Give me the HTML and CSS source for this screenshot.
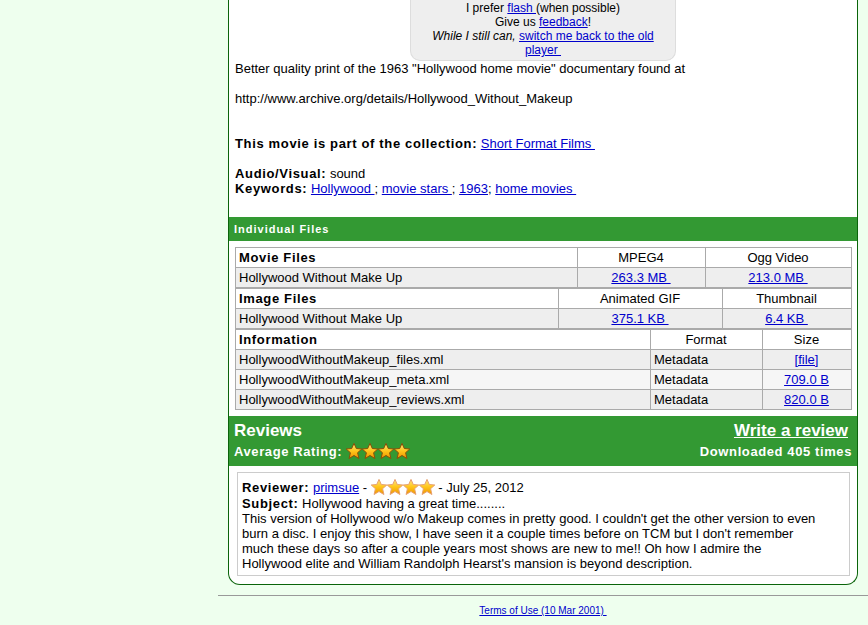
FILE: index.html
```html
<!DOCTYPE html>
<html>
<head>
<meta charset="utf-8">
<title>Hollywood Without Make Up</title>
<link rel="stylesheet" href="styles.css">
</head>
<body>
<svg class="defs" width="0" height="0" aria-hidden="true">
  <defs>
    <linearGradient id="gold" x1="0" y1="0" x2="0" y2="1">
      <stop offset="0" stop-color="#ffe680"/>
      <stop offset="0.5" stop-color="#ffc61a"/>
      <stop offset="1" stop-color="#ee9200"/>
    </linearGradient>
    <symbol id="star" viewBox="0 0 16 16">
      <path d="M8 0.4 L10.3 5.5 L15.8 6 L11.6 9.7 L12.9 15.5 L8 12.5 L3.1 15.5 L4.4 9.7 L0.2 6 L5.7 5.5 Z" fill="url(#gold)" stroke="#8a4e08" stroke-width="1" stroke-linejoin="round"/>
    </symbol>
    <symbol id="star-light" viewBox="0 0 16 16">
      <path d="M8 0.4 L10.3 5.5 L15.8 6 L11.6 9.7 L12.9 15.5 L8 12.5 L3.1 15.5 L4.4 9.7 L0.2 6 L5.7 5.5 Z" fill="url(#gold)" stroke="#e6a070" stroke-width="1" stroke-linejoin="round"/>
    </symbol>
  </defs>
</svg>
<div class="page">
  <div class="box">
    <div class="player-note">
      I prefer <a href="#">flash </a>(when possible)<br>
      Give us <a href="#">feedback</a>!<br>
      <i>While I still can,</i> <a href="#">switch me back to the old player&nbsp;</a>
    </div>
    <div class="desc">
      Better quality print of the 1963 "Hollywood home movie" documentary found at<br><br>
      http://www.archive.org/details/Hollywood_Without_Makeup<br><br><br>
      <b class="key">This movie is part of the collection:</b> <a href="#">Short Format Films&nbsp;</a><br><br>
      <b class="key">Audio/Visual:</b> sound<br>
      <b class="key">Keywords:</b> <a href="#">Hollywood </a>; <a href="#">movie stars </a>; <a href="#">1963</a>; <a href="#">home movies&nbsp;</a>
    </div>
    <div class="section-head">Individual Files</div>
    <div class="files">
      <table class="ftable">
        <colgroup><col class="m1"><col class="m2"><col class="m3"></colgroup>
        <tr class="hrow"><td class="key">Movie Files</td><td class="c">MPEG4</td><td class="c">Ogg Video</td></tr>
        <tr class="odd"><td>Hollywood Without Make Up</td><td class="c"><a href="#">263.3 MB&nbsp;</a></td><td class="c"><a href="#">213.0 MB&nbsp;</a></td></tr>
      </table>
      <table class="ftable">
        <colgroup><col class="i1"><col class="i2"><col class="i3"></colgroup>
        <tr class="hrow"><td class="key">Image Files</td><td class="c">Animated GIF</td><td class="c">Thumbnail</td></tr>
        <tr class="odd"><td>Hollywood Without Make Up</td><td class="c"><a href="#">375.1 KB&nbsp;</a></td><td class="c"><a href="#">6.4 KB&nbsp;</a></td></tr>
      </table>
      <table class="ftable">
        <colgroup><col class="n1"><col class="n2"><col class="n3"></colgroup>
        <tr class="hrow"><td class="key">Information</td><td class="c">Format</td><td class="c">Size</td></tr>
        <tr class="odd"><td>HollywoodWithoutMakeup_files.xml</td><td>Metadata</td><td class="c"><a href="#">[file]</a></td></tr>
        <tr class="even"><td>HollywoodWithoutMakeup_meta.xml</td><td>Metadata</td><td class="c"><a href="#">709.0 B</a></td></tr>
        <tr class="odd"><td>HollywoodWithoutMakeup_reviews.xml</td><td>Metadata</td><td class="c"><a href="#">820.0 B</a></td></tr>
      </table>
    </div>
    <div class="reviews-head">
      <div class="rh-row">
        <span class="rh-title">Reviews</span>
        <a class="rh-write" href="#">Write a review</a>
      </div>
      <div class="rh-row">
        <span class="rh-avg">Average Rating: <span class="stars"><svg class="star"><use href="#star"/></svg><svg class="star"><use href="#star"/></svg><svg class="star"><use href="#star"/></svg><svg class="star"><use href="#star"/></svg></span></span>
        <span class="rh-dl">Downloaded 405 times</span>
      </div>
    </div>
    <div class="review-wrap">
      <div class="review">
        <div class="rv-line"><b class="key">Reviewer:</b> <a href="#">primsue</a> - <span class="stars"><svg class="star"><use href="#star-light"/></svg><svg class="star"><use href="#star-light"/></svg><svg class="star"><use href="#star-light"/></svg><svg class="star"><use href="#star-light"/></svg></span> - July 25, 2012</div>
        <div><b class="key">Subject:</b> Hollywood having a great time........</div>
        <div class="rv-body">This version of Hollywood w/o Makeup comes in pretty good. I couldn't get the other version to even burn a disc. I enjoy this show, I have seen it a couple times before on TCM but I don't remember much these days so after a couple years most shows are new to me!! Oh how I admire the Hollywood elite and William Randolph Hearst's mansion is beyond description.</div>
      </div>
    </div>
  </div>
  <hr class="rule">
  <div class="footer"><a href="#">Terms of Use (10 Mar 2001)&nbsp;</a></div>
</div>
</body>
</html>
```

FILE: styles.css
```css
html, body {
  margin: 0;
  padding: 0;
}
body {
  background: #eeffee;
  font-family: "Liberation Sans", Arial, sans-serif;
  font-size: 13px;
  line-height: 15px;
  color: #000;
}
a {
  color: #0000cc;
  text-decoration: underline;
}
.defs {
  position: absolute;
  width: 0;
  height: 0;
  overflow: hidden;
}
.page {
  margin-left: 218px;
  padding-bottom: 20px;
}
.box {
  margin: 0 10px;
  background: #fff;
  border: 1px solid #0a640a;
  border-top: none;
  border-radius: 0 0 12px 12px;
  padding-bottom: 8px;
}
.key {
  font-weight: bold;
  letter-spacing: 0.65px;
}
.player-note {
  width: 254px;
  margin: 0 auto;
  padding: 1px 5px 3px;
  background: #eeeeee;
  border: 1px solid #dddddd;
  border-top: none;
  border-radius: 0 0 10px 10px;
  text-align: center;
  font-size: 12px;
  line-height: 14px;
}
.desc {
  padding: 0 6px;
}
.section-head {
  margin-top: 21px;
  background: #339933;
  color: #fff;
  font-size: 11px;
  font-weight: bold;
  letter-spacing: 1px;
  line-height: 24px;
  height: 24px;
  padding: 0 5px;
}
.files {
  padding: 6px;
}
.ftable {
  width: 100%;
  border-collapse: collapse;
  table-layout: fixed;
  border: 1px solid #aaaaaa;
}
.ftable td {
  border: 1px solid #aaaaaa;
  padding: 2px 4px 2px 3px;
  line-height: 15px;
  white-space: nowrap;
  overflow: hidden;
}
.ftable td.c {
  text-align: center;
}
.hrow td {
  background: #fff;
}
.odd td {
  background: #eeeeee;
}
.even td {
  background: #f6f6f6;
}
.m1 { width: 342px; }
.m2 { width: 128px; }
.m3 { width: 146px; }
.i1 { width: 323px; }
.i2 { width: 164px; }
.i3 { width: 129px; }
.n1 { width: 415px; }
.n2 { width: 112px; }
.n3 { width: 89px; }
.reviews-head {
  background: #339933;
  color: #fff;
  font-weight: bold;
  padding: 4px 5px 5px;
}
.rh-row {
  display: flex;
  justify-content: space-between;
  align-items: center;
  height: 20px;
}
.rh-row + .rh-row {
  margin-top: 1px;
}
.rh-title {
  font-size: 17px;
}
.rh-write {
  color: #fff;
  font-size: 17px;
  margin-right: 4px;
}
.rh-avg, .rh-dl {
  font-size: 13px;
  letter-spacing: 0.6px;
}
.stars {
  display: inline-flex;
  vertical-align: -3px;
  letter-spacing: 0;
}
.star {
  width: 16px;
  height: 16px;
}
.review-wrap {
  padding: 6px 7px 0 8px;
}
.review {
  border: 1px solid #cccccc;
  padding: 6px 24px 4px 4px;
}
.rv-line {
  line-height: 18px;
  margin-bottom: -1px;
}
.rule {
  margin: 10px 0 0;
  border: none;
  border-top: 1px solid #999999;
  height: 0;
}
.footer {
  text-align: center;
  font-size: 10px;
  line-height: 12px;
  padding-top: 9px;
}
```
